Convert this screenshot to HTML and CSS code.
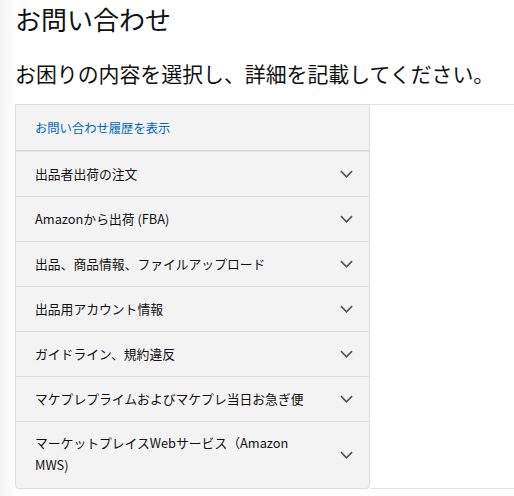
FILE: index.html
```html
<!DOCTYPE html>
<html lang="ja">
<head>
<meta charset="utf-8">
<link rel="stylesheet" href="styles.css">
</head>
<body>
<div class="page">
  <h1 class="title">お問い合わせ</h1>
  <p class="lead">お困りの内容を選択し、詳細を記載してください。</p>
  <div class="layout">
    <div class="menu">
      <a class="row row-link" href="#">お問い合わせ履歴を表示</a>
      <div class="row"><span>出品者出荷の注文</span><svg class="chev" viewBox="0 0 14 8"><path d="M1 1 L7 7 L13 1"/></svg></div>
      <div class="row"><span>Amazonから出荷 (FBA)</span><svg class="chev" viewBox="0 0 14 8"><path d="M1 1 L7 7 L13 1"/></svg></div>
      <div class="row"><span>出品、商品情報、ファイルアップロード</span><svg class="chev" viewBox="0 0 14 8"><path d="M1 1 L7 7 L13 1"/></svg></div>
      <div class="row"><span>出品用アカウント情報</span><svg class="chev" viewBox="0 0 14 8"><path d="M1 1 L7 7 L13 1"/></svg></div>
      <div class="row"><span>ガイドライン、規約違反</span><svg class="chev" viewBox="0 0 14 8"><path d="M1 1 L7 7 L13 1"/></svg></div>
      <div class="row"><span>マケプレプライムおよびマケプレ当日お急ぎ便</span><svg class="chev" viewBox="0 0 14 8"><path d="M1 1 L7 7 L13 1"/></svg></div>
      <div class="row row-tall"><span>マーケットプレイスWebサービス（Amazon MWS)</span><svg class="chev" viewBox="0 0 14 8"><path d="M1 1 L7 7 L13 1"/></svg></div>
    </div>
    <div class="detail"></div>
  </div>
</div>
</body>
</html>
```
FILE: styles.css
```css
html, body {
  margin: 0;
  padding: 0;
}
body {
  background: linear-gradient(to right, #f4f4f4 0px, #fbfbfb 10px, #ffffff 16px);
  font-family: "Noto Sans CJK JP", "Noto Sans", sans-serif;
  color: #111;
  width: 514px;
  height: 496px;
  overflow: hidden;
}
.page {
  padding: 0 0 0 15px;
}
.title {
  margin: 0;
  padding-top: 1px;
  font-size: 26px;
  font-weight: 400;
  line-height: 36px;
  color: #111;
}
.lead {
  margin: 21px 0 0;
  font-size: 20.9px;
  line-height: 30px;
  color: #111;
  white-space: nowrap;
}
.layout {
  display: flex;
  margin-top: 16px;
}
.menu {
  width: 353px;
  background: #f3f3f3;
  border: 1px solid #dddddd;
  border-radius: 0 0 4px 4px;
  display: flex;
  flex-direction: column;
}
.row {
  display: flex;
  align-items: center;
  justify-content: space-between;
  height: 44px;
  padding: 0 16px 0 19px;
  border-top: 1px solid #dddddd;
  font-size: 12.8px;
  color: #111;
}
.row-link {
  border-top: none;
  height: 45px;
  border-bottom: 1px solid #d4d4d4;
  color: #0066c0;
  text-decoration: none;
  font-size: 12.3px;
}
.row-link + .row {
  border-top: 1px solid #e8e8e8;
}
.row span {
  line-height: 22px;
}
.row-tall {
  height: 66px;
}
.row-tall span {
  width: 280px;
  margin-top: -2px;
}
.chev {
  width: 13px;
  height: 8px;
  flex: none;
  fill: none;
  stroke: #555;
  stroke-width: 1.8;
}
.detail {
  flex: 1;
  background: #fff;
  border-top: 1px solid #e3e3e3;
  border-bottom: 1px solid #e3e3e3;
}
```
